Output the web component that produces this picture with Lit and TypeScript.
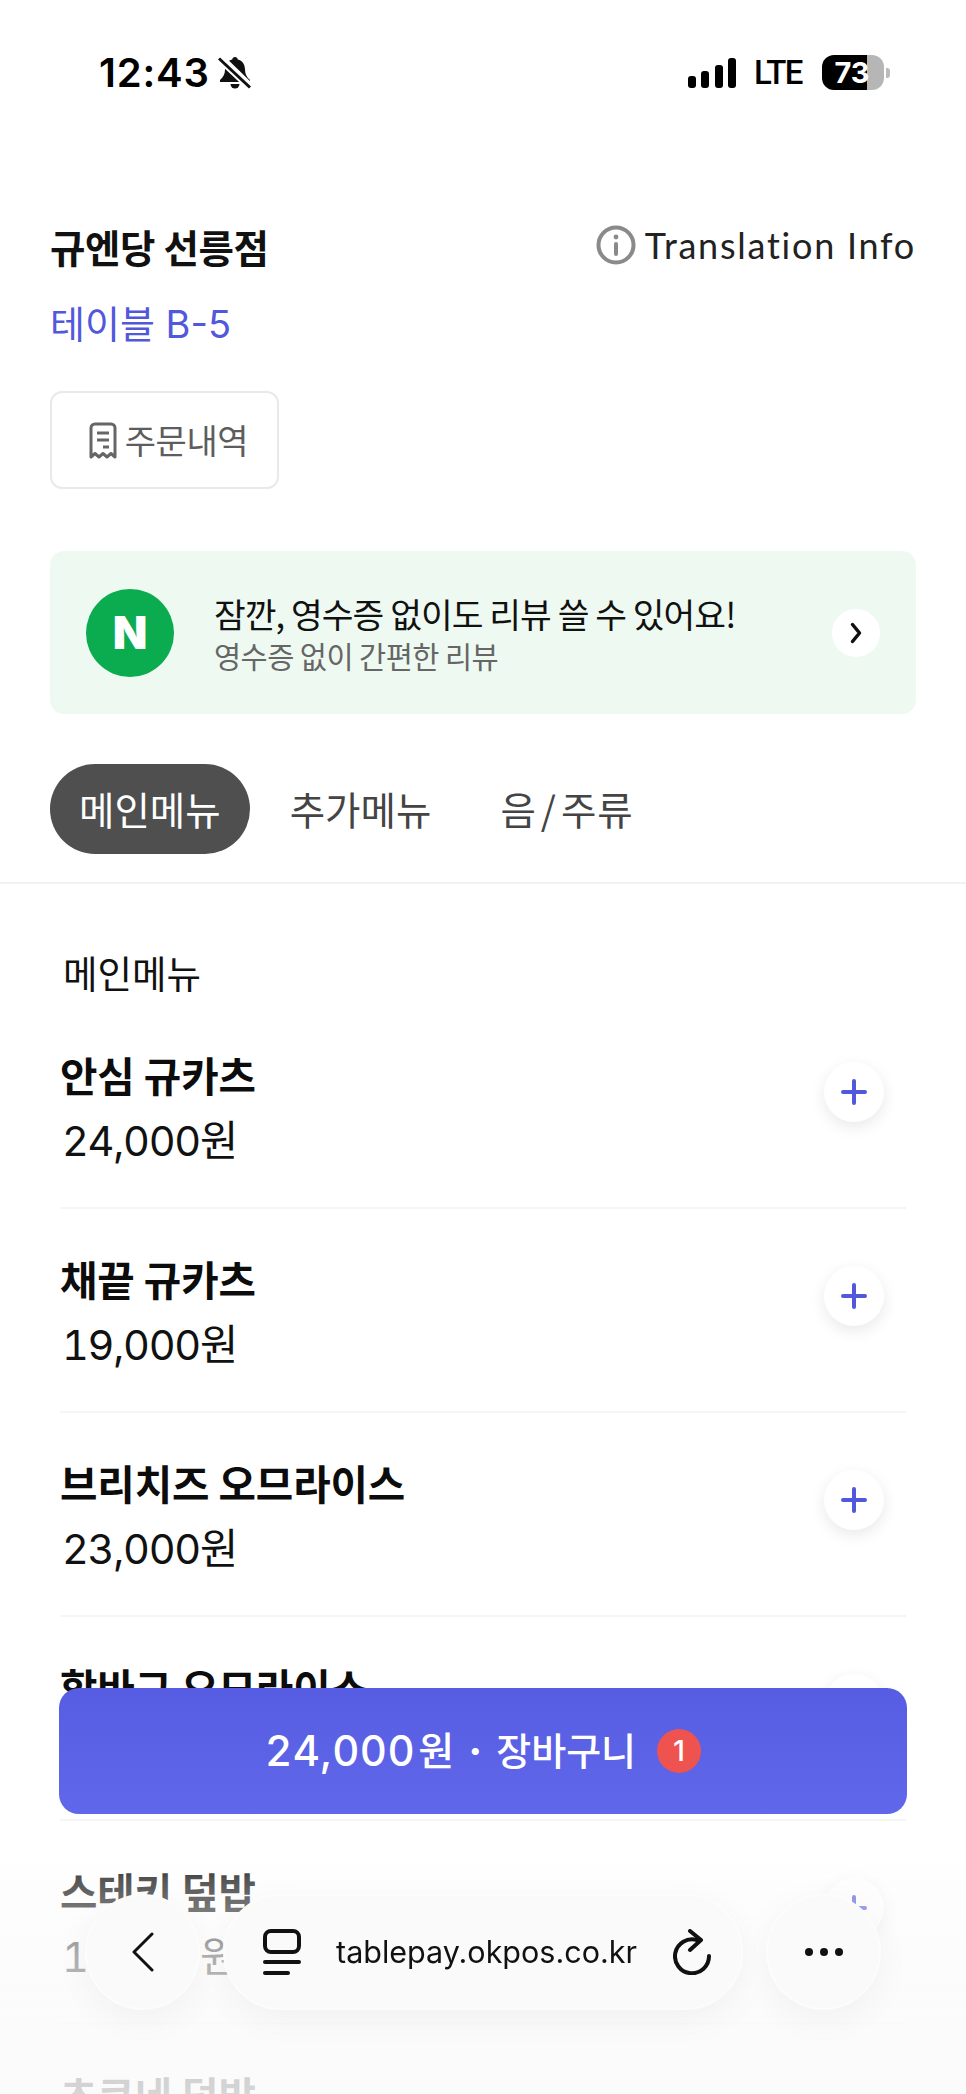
import { LitElement, html, css } from "lit";
import { customElement } from "lit/decorators.js";

const KR = css`"Noto Sans CJK KR", sans-serif`;
const items = [
  ["안심 규카츠", "24,000원"],
  ["채끝 규카츠", "19,000원"],
  ["브리치즈 오므라이스", "23,000원"],
  ["함바그 오므라이스", "18,000원"],
  ["스테키 덮밥", "16,000원"],
  ["츠쿠네 덮밥", "15,000원"],
];

@customElement("app-root")
export class AppRoot extends LitElement {
  static styles = css`
    :host { display: block; position: relative; width: 966px; height: 2094px; overflow: hidden; background: #fff; font-family: Inter, "Noto Sans CJK KR", sans-serif; color: #000; }
    * { box-sizing: border-box; }
    svg { display: block; flex: none; }
    .status { display: flex; justify-content: space-between; align-items: center; height: 35px; margin-top: 55px; padding: 0 76px 0 99px; }
    .sl, .sr { display: flex; align-items: center; }
    .time { font: 600 40px/35px Inter, sans-serif; letter-spacing: .8px; width: 116px; }
    .bell { margin-left: 3px; }
    .lte { font: 500 33px/35px Roboto, sans-serif; margin: 0 20px 0 18px; letter-spacing: -1.5px; }
    .batt { width: 62px; height: 35px; border-radius: 12px; overflow: hidden; background: linear-gradient(to right, #000 0 45px, #b6b6b6 45px); color: #fff; font: 700 29px/35px Inter, sans-serif; text-align: center; padding-right: 2px; }
    .nub { width: 4px; height: 10px; margin-left: 2px; border-radius: 0 3px 3px 0; background: #bbb; }
    .head { display: flex; justify-content: space-between; align-items: flex-start; padding: 0 50px; margin-top: 132px; }
    .store { font: 700 38.5px/48px ${KR}; letter-spacing: -.4px; color: #111; }
    .info { display: flex; align-items: center; gap: 9px; font: 400 36px/44px Lato, sans-serif; letter-spacing: 1.75px; color: #222; margin-top: 1px; }
    .table { font: 400 38px/48px Inter, ${KR}; color: #5158dc; padding: 0 50px; margin-top: 30px; }
    .orders { margin: 43px 0 0 50px; width: 229px; height: 98px; border: 2.5px solid #e9e9e9; border-radius: 12px; display: flex; align-items: center; justify-content: center; gap: 8px; padding-left: 8px; font: 400 34px/44px ${KR}; color: #5d5d5d; letter-spacing: -.4px; }
    .banner { margin: 62px 50px 0; height: 163px; background: #eefaf1; border-radius: 14px; display: flex; align-items: center; padding: 0 36px; }
    .nlogo { width: 88px; height: 88px; border-radius: 50%; background: #0bab50; color: #fff; font: 900 45px/88px Inter, sans-serif; text-align: center; flex: none; }
    .btext { flex: 1; margin-left: 40px; display: flex; flex-direction: column; }
    .bt { font: 400 34.5px/46px ${KR}; color: #111; letter-spacing: -.95px; }
    .bs { font: 400 29.5px/39px ${KR}; color: #666; letter-spacing: -.55px; }
    .go { width: 48px; height: 48px; border-radius: 50%; background: #fff; display: flex; align-items: center; justify-content: center; }
    .tabs { display: flex; gap: 11px; padding: 0 50px 28px; margin-top: 50px; border-bottom: 2px solid #f2f2f2; }
    .tab { height: 90px; padding: 0 29px; border-radius: 45px; font: 400 38.5px/88px ${KR}; color: #444; }
    .tab.on { background: #4f4f4f; color: #fff; }
    .tab.drinks { letter-spacing: 1px; }
    .slash { padding: 0 4px; }
    .menu { padding: 0 60px; }
    .sect { font: 400 37.5px/52px ${KR}; color: #111; margin: 62px 0 7px 3px; }
    .row { height: 204px; border-bottom: 2px solid #f5f5f5; display: flex; justify-content: space-between; align-items: flex-start; }
    .name { font: 700 40.7px/56px ${KR}; color: #0c0c0c; margin-top: 42px; letter-spacing: -.1px; }
    .price { font: 400 41.5px/50px Inter, ${KR}; font-feature-settings: "tnum"; color: #111; margin: 13px 0 0 2px; letter-spacing: -1.3px; }
    .plus { width: 60px; height: 60px; border-radius: 50%; background: #fff; box-shadow: 0 5px 16px rgba(0,0,0,.09); margin: 57px 22px 0 0; display: flex; align-items: center; justify-content: center; }
    .cart { position: absolute; left: 59px; top: 1688px; width: 848px; height: 126px; border-radius: 20px; background: linear-gradient(#565de2, #6067ea); color: #fff; display: flex; align-items: center; justify-content: center; gap: 21px; font: 500 42px/56px Inter, ${KR}; }
    .label { display: flex; align-items: center; }
    .num { letter-spacing: .5px; font-feature-settings: "tnum"; }
    .won { font-size: 39px; margin-left: 3px; }
    .dot { margin: 0 14px; font-weight: 700; }
    .kor { font-size: 38px; }
    .badge { width: 44px; height: 44px; border-radius: 50%; background: #ef5350; font: 500 29px/44px Inter, sans-serif; text-align: center; }
    .fade { position: absolute; left: 0; right: 0; bottom: 0; height: 240px; background: linear-gradient(rgba(250,250,250,0) 0, rgba(250,250,250,.3) 25px, rgba(250,250,250,.68) 100px, rgba(250,250,250,.85) 100%); backdrop-filter: blur(.6px); }
    .bar { position: absolute; left: 85px; top: 1894px; display: flex; gap: 23px; }
    .glass { height: 116px; background: #fafafa; border: 2px solid #fcfcfc; box-shadow: 0 10px 36px rgba(0,0,0,.045); display: flex; align-items: center; }
    .circle { width: 115px; border-radius: 50%; justify-content: center; }
    .pill { width: 520px; border-radius: 58px; padding: 0 0 0 38px; }
    .url { font: 400 30.5px/40px Inter, sans-serif; color: #111; margin: 0 35px 0 35px; width: 302px; white-space: nowrap; }
  `;

  render() {
    return html`
      <div class="status">
        <div class="sl">
          <span class="time">12:43</span>
          <svg class="bell" width="34" height="34" viewBox="0 0 34 34"><path d="M17 1c1.6 0 2.6 1 2.8 2.400 4.600 1 7.200 5 7.200 10 0 4.500 1.600 7.600 5 10.600v2H2v-2c3.400-3 5-6.100 5-10.600 0-5 2.600-9 7.200-10C14.400 2 15.400 1 17 1z" fill="#111"/><path d="M12.500 28h9a4.500 4.500 0 0 1-9 0z" fill="#111"/><path d="M5 1l29 28" stroke="#fff" stroke-width="3"/><path d="M1 3l30 28" stroke="#fff" stroke-width="6"/><path d="M1 2.500l31 29" stroke="#111" stroke-width="3"/></svg>
        </div>
        <div class="sr">
          <svg width="48" height="30" viewBox="0 0 48 30"><rect x="0" y="18" width="8" height="12" rx="3"/><rect x="13" y="13" width="8" height="17" rx="3"/><rect x="27" y="7" width="8" height="23" rx="3"/><rect x="40" y="0" width="8" height="30" rx="3"/></svg>
          <span class="lte">LTE</span>
          <div class="batt">73</div>
          <div class="nub"></div>
        </div>
      </div>

      <div class="head">
        <div class="store">규엔당 선릉점</div>
        <div class="info">
          <svg width="40" height="40" viewBox="0 0 40 40"><circle cx="20" cy="20" r="17.500" fill="none" stroke="#8a8a8a" stroke-width="4"/><circle cx="20" cy="12" r="2.400" fill="#8a8a8a"/><rect x="18" y="17" width="4" height="14" rx="2" fill="#8a8a8a"/></svg>
          <span>Translation Info</span>
        </div>
      </div>
      <div class="table">테이블 B-5</div>
      <div class="orders">
        <svg width="28" height="37" viewBox="0 0 28 37" fill="none" stroke="#666" stroke-width="3"><path d="M2 35V6a4 4 0 0 1 4-4h16a4 4 0 0 1 4 4v29l-4-3.500-4 3.500-4-3.500-4 3.500-4-3.500z" stroke-linejoin="round"/><path d="M8 11h12M8 18h12M14 25h6"/></svg>
        <span>주문내역</span>
      </div>

      <div class="banner">
        <div class="nlogo">N</div>
        <div class="btext">
          <div class="bt">잠깐, 영수증 없이도 리뷰 쓸 수 있어요!</div>
          <div class="bs">영수증 없이 간편한 리뷰</div>
        </div>
        <div class="go"><svg width="12" height="22" viewBox="0 0 12 22" fill="none" stroke="#111" stroke-width="3.500" stroke-linecap="round" stroke-linejoin="round"><path d="M2.500 2.500L9.500 11l-7 8.500"/></svg></div>
      </div>

      <div class="tabs">
        <div class="tab on">메인메뉴</div>
        <div class="tab">추가메뉴</div>
        <div class="tab drinks">음<span class="slash">/</span>주류</div>
      </div>

      <div class="menu">
        <div class="sect">메인메뉴</div>
        ${items.map(([n, p]) => html`
          <div class="row">
            <div>
              <div class="name">${n}</div>
              <div class="price">${p}</div>
            </div>
            <div class="plus"><svg width="26" height="26" viewBox="0 0 26 26" stroke="#5158dc" stroke-width="4" stroke-linecap="round"><path d="M13 2v22M2 13h22"/></svg></div>
          </div>`)}
      </div>

      <div class="fade"></div>

      <div class="cart">
        <div class="label"><span class="num">24,000</span><span class="won">원</span><span class="dot">·</span><span class="kor">장바구니</span></div>
        <div class="badge">1</div>
      </div>

      <div class="bar">
        <div class="glass circle"><svg width="24" height="40" viewBox="0 0 24 40" fill="none" stroke="#111" stroke-width="3" stroke-linecap="round" stroke-linejoin="round"><path d="M21 2L3 20l18 18"/></svg></div>
        <div class="glass pill">
          <svg width="38" height="46" viewBox="0 0 38 46" fill="none" stroke="#111" stroke-width="4" stroke-linecap="round"><rect x="2" y="2" width="34" height="21" rx="6"/><path d="M2 33h34M2 44h23"/></svg>
          <span class="url">tablepay.okpos.co.kr</span>
          <svg width="40" height="46" viewBox="0 0 40 46" fill="none" stroke="#111" stroke-width="4" stroke-linecap="round" stroke-linejoin="round"><path d="M24 11a17 17 0 1 0 12 16"/><path d="M17 2l11 9-11 10"/></svg>
        </div>
        <div class="glass circle"><svg width="40" height="10" viewBox="0 0 40 10" fill="#111"><circle cx="5" cy="5" r="4"/><circle cx="20" cy="5" r="4"/><circle cx="35" cy="5" r="4"/></svg></div>
      </div>
    `;
  }
}
